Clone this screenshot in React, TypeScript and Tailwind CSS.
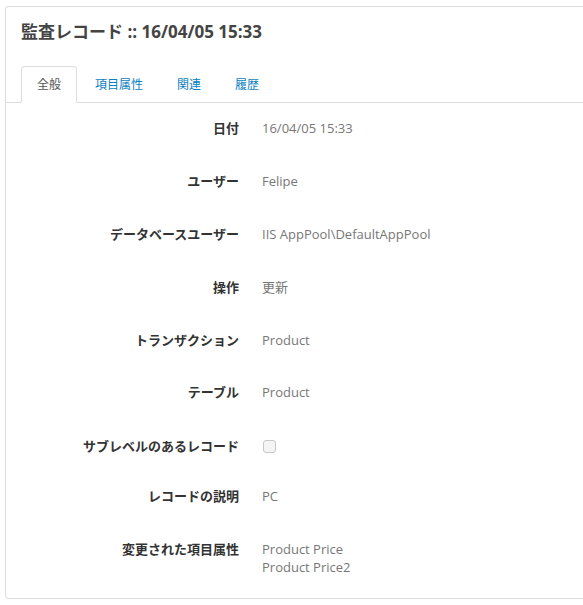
import React from 'react';

type Row = { label: string; values?: string[]; checkbox?: boolean; mt: string };

const rows: Row[] = [
  { label: '日付', values: ['16/04/05 15:33'], mt: 'mt-[16px]' },
  { label: 'ユーザー', values: ['Felipe'], mt: 'mt-[35px]' },
  { label: 'データベースユーザー', values: ['IIS AppPool\\DefaultAppPool'], mt: 'mt-[35px]' },
  { label: '操作', values: ['更新'], mt: 'mt-[35px]' },
  { label: 'トランザクション', values: ['Product'], mt: 'mt-[35px]' },
  { label: 'テーブル', values: ['Product'], mt: 'mt-[34px]' },
  { label: 'サブレベルのあるレコード', checkbox: true, mt: 'mt-[36px]' },
  { label: 'レコードの説明', values: ['PC'], mt: 'mt-[32px]' },
  { label: '変更された項目属性', values: ['Product Price', 'Product Price2'], mt: 'mt-[35px]' },
];

const tabs = ['全般', '項目属性', '関連', '履歴'];

const App: React.FC = () => {
  return (
    <div className="min-h-[605px] bg-white pt-[6px] pl-[5px] font-['Open_Sans','Noto_Sans_CJK_JP',sans-serif] text-[#333]">
      <div className="h-[593px] rounded-l-[4px] border border-r-0 border-[#ddd] bg-white">
        <h2 className="pl-[15px] pt-[13px] text-[17px] leading-[23px] font-bold text-[#444]">
          監査レコード :: 16/04/05 15:33
        </h2>

        <ul className="mt-[23px] flex border-b border-[#ddd] pl-[15px]">
          {tabs.map((t, i) => (
            <li key={t} className="-mb-px mr-[2px]">
              <a
                className={
                  i === 0
                    ? 'block rounded-t-[4px] border border-[#ddd] border-b-white bg-white px-[15px] py-[10px] text-[12px] leading-[15px] text-[#555]'
                    : 'block rounded-t-[4px] border border-transparent px-[15px] py-[10px] text-[12px] leading-[15px] text-[#0a7fc1]'
                }
              >
                {t}
              </a>
            </li>
          ))}
        </ul>

        <div className="flex flex-col">
          {rows.map((r) => (
            <div key={r.label} className={`flex ${r.mt}`}>
              <div className="w-[233px] text-right text-[13px] leading-[18px] font-bold text-[#333]">{r.label}</div>
              <div className="ml-[23px] text-[13px] leading-[18px] text-[#777]">
                {r.checkbox ? (
                  <div className="mt-[3px] ml-px h-[13px] w-[13px] rounded-[3px] border border-[#c8c8c8] bg-[#f4f4f4]" />
                ) : (
                  r.values!.map((v) => <div key={v}>{v}</div>)
                )}
              </div>
            </div>
          ))}
        </div>
      </div>
    </div>
  );
};

export default App;
